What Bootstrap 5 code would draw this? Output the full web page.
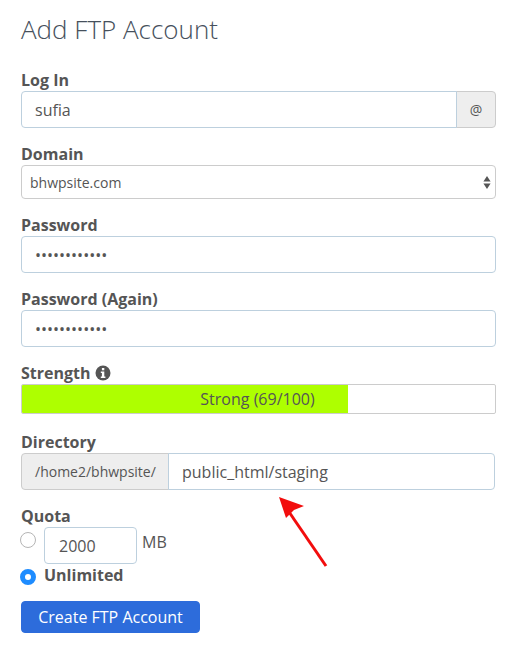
<!DOCTYPE html>
<html lang="en">
<head>
<meta charset="utf-8">
<title>Add FTP Account</title>
<link rel="stylesheet" href="https://cdn.jsdelivr.net/npm/bootstrap@5.3.0/dist/css/bootstrap.min.css">
<style>
body{font-family:"Open Sans",sans-serif;color:#555;background:#fff;font-size:16px;position:relative}
.ftp-page{width:475px;margin-left:21px;padding-top:11px}
.ftp-title{font-size:26px;font-weight:300;line-height:36px;color:#46505c;margin:0 0 22px}
.ftp-field{margin-bottom:15px}
.ftp-field-meter{margin-bottom:17px}
.ftp-label{display:block;font-weight:700;font-size:16px;line-height:22px;margin:0;color:#555}
.ftp-page .form-control{height:37px;border:1px solid #bdd0de;border-radius:4px;font-size:16px;color:#555;padding:0 13px;box-shadow:none}
.ftp-page .input-group-text{background:#eee;border:1px solid #ccc;border-radius:4px;font-size:14px;color:#555}
.ftp-at{width:40px;justify-content:center;padding:0;margin-left:-1px}
.ftp-page .form-select{height:34px;border:1px solid #ccc;border-radius:4px;font-size:14px;color:#555;padding:0 24px 0 8px;background-position:right 4px center;background-size:8px 13px;background-image:url("data:image/svg+xml,%3Csvg xmlns='http://www.w3.org/2000/svg' viewBox='0 0 8 13'%3E%3Cpath fill='%23555' d='M4 0l3.6 5.4H.4zM4 13L.4 7.6h7.2z'/%3E%3C/svg%3E")}
.ftp-meter{height:30px;border:1px solid #ccc;border-radius:2px;background:#fff;font-size:16px;color:#555;overflow:hidden}
.ftp-meter .progress-bar{background:#aeff00;color:#555;overflow:visible;white-space:nowrap;font-size:16px}
.ftp-meter-label{padding-right:2px}
.ftp-info{width:16px;height:16px;vertical-align:-2px;margin-left:0}
.ftp-dir{width:474px}
.ftp-dir .input-group-text{padding:0 12px 0 13px;width:148px;border-color:#ccc}
.ftp-quota-row{height:37px}
.ftp-radio{appearance:none;width:16px;height:16px;border:1px solid #b5b5b5;border-radius:50%;background:#fff;margin:5px 8px 0 -1px;flex:none}
.ftp-radio:checked{border:5px solid #1e8cff;background:#fff}
.ftp-qty{width:93px!important;flex:none;padding-left:14px!important}
.ftp-mb{margin:3px 0 0 5px;line-height:24px}
.ftp-unlim{line-height:22px;font-weight:700;font-size:16px}
.ftp-unlim .ftp-radio{margin-top:5px;margin-right:8px}
.ftp-submit{background:#2d6cdb;border:1px solid #2d6cdb;color:#fff;font-size:16px;font-weight:500;width:179px;height:32px;padding:0;border-radius:4px;margin-top:15px;line-height:1}
.ftp-submit:hover{background:#2d6cdb;color:#fff;border-color:#2d6cdb}
.ftp-arrow{position:absolute;left:272px;top:495px;width:60px;height:75px;pointer-events:none}
</style>
</head>
<body>
<main class="ftp-page">
  <h1 class="ftp-title">Add FTP Account</h1>
  <form>
    <div class="ftp-field">
      <label class="ftp-label" for="login">Log In</label>
      <div class="input-group flex-nowrap">
        <input id="login" class="form-control" type="text" value="sufia">
        <span class="input-group-text ftp-at">@</span>
      </div>
    </div>
    <div class="ftp-field">
      <label class="ftp-label" for="domain">Domain</label>
      <select id="domain" class="form-select"><option>bhwpsite.com</option></select>
    </div>
    <div class="ftp-field">
      <label class="ftp-label" for="p1">Password</label>
      <input id="p1" class="form-control" type="password" value="abcdefghijkl">
    </div>
    <div class="ftp-field">
      <label class="ftp-label" for="p2">Password (Again)</label>
      <input id="p2" class="form-control" type="password" value="abcdefghijkl">
    </div>
    <div class="ftp-field ftp-field-meter">
      <div class="ftp-label">Strength
        <svg class="ftp-info" viewBox="0 0 16 16"><circle cx="8" cy="8" r="7.5" fill="#555"/><rect x="6.9" y="3" width="2.4" height="2.3" fill="#fff"/><path fill="#fff" d="M5.8 6.5h3.5v5h1.1V13H5.8v-1.5h1.1V8H5.8z"/></svg>
      </div>
      <div class="progress ftp-meter position-relative">
        <div class="progress-bar" style="width:69%"></div>
        <div class="position-absolute top-0 start-0 h-100 w-100 d-flex align-items-center"><span class="w-100 text-center ftp-meter-label">Strong (69/100)</span></div>
      </div>
    </div>
    <div class="ftp-field">
      <label class="ftp-label" for="dir">Directory</label>
      <div class="input-group flex-nowrap ftp-dir">
        <span class="input-group-text">/home2/bhwpsite/</span>
        <input id="dir" class="form-control" type="text" value="public_html/staging">
      </div>
    </div>
    <div class="ftp-label">Quota</div>
    <div class="d-flex align-items-start ftp-quota-row">
      <input class="ftp-radio" type="radio" name="q" aria-label="Limited">
      <input class="form-control ftp-qty" type="text" value="2000" aria-label="Quota">
      <span class="ftp-mb">MB</span>
    </div>
    <div class="d-flex align-items-start ftp-unlim">
      <input class="ftp-radio" type="radio" name="q" id="u" checked>
      <label for="u">Unlimited</label>
    </div>
    <button type="button" class="btn ftp-submit d-block">Create FTP Account</button>
  </form>
</main>
<svg class="ftp-arrow" viewBox="0 0 60 75"><path d="M54 71L15 14" stroke="#f20d0d" stroke-width="3" fill="none"/><path fill="#f20d0d" d="M7 2l25 9-10 4-8 8z"/></svg>
</body>
</html>
